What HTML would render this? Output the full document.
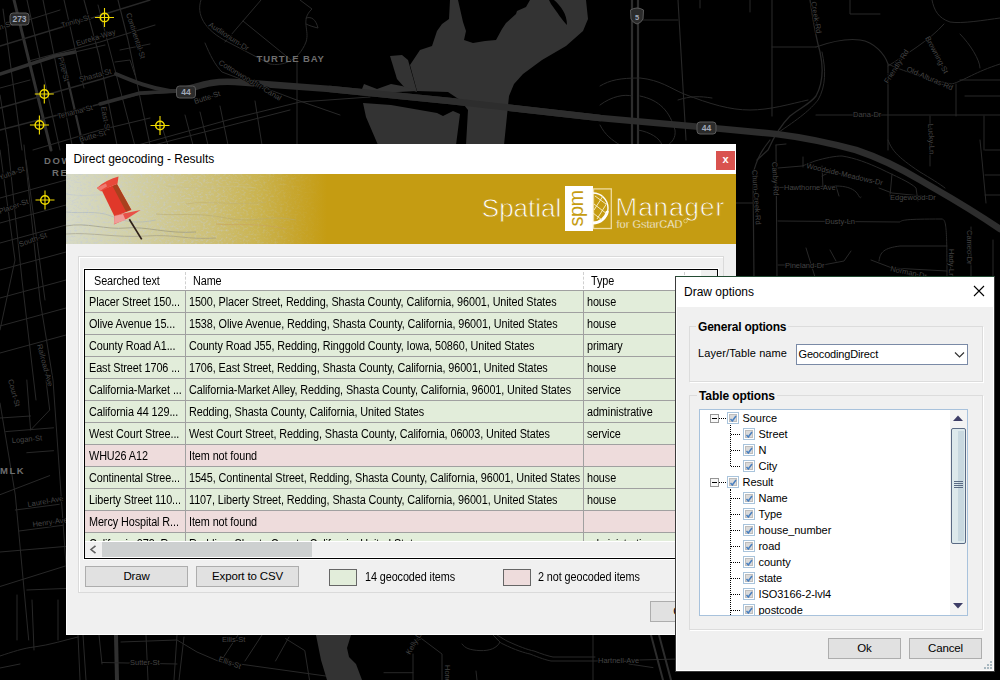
<!DOCTYPE html>
<html><head><meta charset="utf-8">
<style>
*{box-sizing:border-box}
html,body{margin:0;padding:0}
body{width:1000px;height:680px;overflow:hidden;position:relative;background:#000;font-family:"Liberation Sans",sans-serif;font-size:11px;color:#000}
.a{position:absolute}
.t{position:absolute;white-space:nowrap;letter-spacing:-0.16px;line-height:13px}
.r{font-size:12px;letter-spacing:-0.1px;transform:scaleX(0.903);transform-origin:0 0}
.btn{position:absolute;background:#e1e1e1;border:1px solid #adadad;text-align:center;font-size:11.5px;letter-spacing:-0.15px}
</style></head><body>
<svg class="a" style="left:0;top:0" width="1000" height="680" viewBox="0 0 1000 680">
<path d="M3.0 9.0 L22.0 150.0" fill="none" stroke="#282828" stroke-width="1.1" stroke-linejoin="round" stroke-linecap="round"/>
<path d="M14.0 0.0 L51.0 150.0" fill="none" stroke="#303030" stroke-width="3.0" stroke-linejoin="round" stroke-linecap="round"/>
<path d="M27.0 0.0 L60.0 150.0" fill="none" stroke="#282828" stroke-width="1.1" stroke-linejoin="round" stroke-linecap="round"/>
<path d="M43.0 0.0 L68.0 124.0 L73.0 150.0" fill="none" stroke="#282828" stroke-width="1.1" stroke-linejoin="round" stroke-linecap="round"/>
<path d="M62.0 55.0 L84.0 150.0" fill="none" stroke="#303030" stroke-width="2.2" stroke-linejoin="round" stroke-linecap="round"/>
<path d="M64.0 0.0 L84.0 88.0" fill="none" stroke="#282828" stroke-width="1.1" stroke-linejoin="round" stroke-linecap="round"/>
<path d="M84.0 0.0 L99.0 55.0 L118.0 150.0" fill="none" stroke="#282828" stroke-width="1.1" stroke-linejoin="round" stroke-linecap="round"/>
<path d="M98.0 5.0 L136.0 150.0" fill="none" stroke="#282828" stroke-width="1.0" stroke-linejoin="round" stroke-linecap="round"/>
<path d="M118.0 0.0 L128.0 40.0 L150.0 145.0" fill="none" stroke="#282828" stroke-width="1.1" stroke-linejoin="round" stroke-linecap="round"/>
<path d="M0.0 95.0 L8.0 145.0" fill="none" stroke="#282828" stroke-width="1.0" stroke-linejoin="round" stroke-linecap="round"/>
<path d="M0.0 46.0 L100.0 15.5 L150.0 0.0" fill="none" stroke="#282828" stroke-width="1.4" stroke-linejoin="round" stroke-linecap="round"/>
<path d="M0.0 29.0 L60.0 10.0" fill="none" stroke="#282828" stroke-width="1.0" stroke-linejoin="round" stroke-linecap="round"/>
<path d="M28.7 61.0 L100.0 42.0 L155.0 25.0" fill="none" stroke="#282828" stroke-width="1.1" stroke-linejoin="round" stroke-linecap="round"/>
<path d="M0.0 74.0 L55.0 56.0 L75.0 52.0" fill="none" stroke="#303030" stroke-width="3.5" stroke-linejoin="round" stroke-linecap="round"/>
<path d="M75.0 52.0 L105.0 45.0" fill="none" stroke="#282828" stroke-width="1.2" stroke-linejoin="round" stroke-linecap="round"/>
<path d="M0.0 108.0 L100.0 79.5 L118.0 74.0" fill="none" stroke="#282828" stroke-width="1.3" stroke-linejoin="round" stroke-linecap="round"/>
<path d="M0.0 130.0 L100.0 104.0 L140.0 94.0" fill="none" stroke="#282828" stroke-width="1.6" stroke-linejoin="round" stroke-linecap="round"/>
<path d="M33.0 150.0 L100.0 130.0 L150.0 118.0" fill="none" stroke="#282828" stroke-width="1.1" stroke-linejoin="round" stroke-linecap="round"/>
<path d="M120.0 50.0 L150.0 44.0" fill="none" stroke="#282828" stroke-width="1.0" stroke-linejoin="round" stroke-linecap="round"/>
<path d="M115.0 62.0 L130.0 60.0 L135.0 75.0" fill="none" stroke="#282828" stroke-width="1.0" stroke-linejoin="round" stroke-linecap="round"/>
<path d="M0.0 88.0 L30.0 80.0" fill="none" stroke="#282828" stroke-width="1.0" stroke-linejoin="round" stroke-linecap="round"/>
<path d="M140.0 94.0 L170.0 92.0" fill="none" stroke="#303030" stroke-width="2.2" stroke-linejoin="round" stroke-linecap="round"/>
<path d="M120.0 150.0 L235.0 118.0 L300.0 102.0 L370.0 97.0" fill="none" stroke="#282828" stroke-width="1.0" stroke-linejoin="round" stroke-linecap="round"/>
<path d="M150.0 146.0 L290.0 110.0" fill="none" stroke="#282828" stroke-width="1.0" stroke-linejoin="round" stroke-linecap="round"/>
<path d="M160.0 121.0 L168.0 145.0" fill="none" stroke="#282828" stroke-width="1.0" stroke-linejoin="round" stroke-linecap="round"/>
<path d="M185.0 115.0 L193.0 145.0" fill="none" stroke="#282828" stroke-width="1.0" stroke-linejoin="round" stroke-linecap="round"/>
<path d="M200.0 112.0 L208.0 145.0" fill="none" stroke="#282828" stroke-width="1.0" stroke-linejoin="round" stroke-linecap="round"/>
<path d="M220.0 106.0 L228.0 145.0" fill="none" stroke="#282828" stroke-width="1.0" stroke-linejoin="round" stroke-linecap="round"/>
<path d="M255.0 101.0 L262.0 145.0" fill="none" stroke="#282828" stroke-width="1.0" stroke-linejoin="round" stroke-linecap="round"/>
<path d="M135.0 30.0 L140.0 50.0" fill="none" stroke="#282828" stroke-width="1.0" stroke-linejoin="round" stroke-linecap="round"/>
<path d="M201 0 C196 14 204 30 228 42 L270 64 C282 66 298 62 306 42 C310 30 300 20 312 9 L300 0" fill="none" stroke="#282828" stroke-width="1.0" stroke-linejoin="round" stroke-linecap="round"/>
<path d="M261.0 0.0 L225.0 42.0" fill="none" stroke="#282828" stroke-width="1.0" stroke-linejoin="round" stroke-linecap="round"/>
<path d="M243.0 21.0 L291.0 60.0" fill="none" stroke="#282828" stroke-width="1.0" stroke-linejoin="round" stroke-linecap="round"/>
<path d="M205 43 C210 55 215 65 222 72 L294 99 L340 115" fill="none" stroke="#282828" stroke-width="1.0" stroke-linejoin="round" stroke-linecap="round"/>
<path d="M297.0 60.0 L297.0 145.0" fill="none" stroke="#282828" stroke-width="1.0" stroke-linejoin="round" stroke-linecap="round"/>
<path d="M306 18 C312 16 316 20 318 28 C314 27 310 26 306 24" fill="none" stroke="#282828" stroke-width="1.0" stroke-linejoin="round" stroke-linecap="round"/>
<path d="M632.0 0.0 L632.0 145.0" fill="none" stroke="#2d2d2d" stroke-width="2.2" stroke-linejoin="round" stroke-linecap="round"/>
<path d="M638.0 0.0 L638.0 145.0" fill="none" stroke="#2d2d2d" stroke-width="2.2" stroke-linejoin="round" stroke-linecap="round"/>
<path d="M640.0 20.0 L678.0 20.0" fill="none" stroke="#282828" stroke-width="1.0" stroke-linejoin="round" stroke-linecap="round"/>
<path d="M678.0 0.0 L686.0 140.0" fill="none" stroke="#282828" stroke-width="1.1" stroke-linejoin="round" stroke-linecap="round"/>
<path d="M772.0 0.0 L772.0 116.0" fill="none" stroke="#282828" stroke-width="1.1" stroke-linejoin="round" stroke-linecap="round"/>
<path d="M772.0 47.0 L816.0 47.0" fill="none" stroke="#282828" stroke-width="1.0" stroke-linejoin="round" stroke-linecap="round"/>
<path d="M810 0 C812 12 814 30 820 52 C824 70 822 85 816 96 C810 104 800 108 790 116 C782 124 776 132 768 150 L757 160" fill="none" stroke="#282828" stroke-width="1.3" stroke-linejoin="round" stroke-linecap="round"/>
<path d="M822 52 C826 70 826 86 818 100 C810 110 800 118 776 134" fill="none" stroke="#282828" stroke-width="1.0" stroke-linejoin="round" stroke-linecap="round"/>
<path d="M816 47 C830 42 845 38 860 40 C875 42 885 55 888 64 L888 150" fill="none" stroke="#282828" stroke-width="1.1" stroke-linejoin="round" stroke-linecap="round"/>
<path d="M888 64 C900 70 930 80 952 84 C965 80 975 72 1000 64" fill="none" stroke="#282828" stroke-width="1.0" stroke-linejoin="round" stroke-linecap="round"/>
<path d="M932 0 C934 10 938 18 950 22 C962 24 985 20 1000 18" fill="none" stroke="#282828" stroke-width="1.0" stroke-linejoin="round" stroke-linecap="round"/>
<path d="M944 24 C930 40 905 55 888 66" fill="none" stroke="#282828" stroke-width="1.0" stroke-linejoin="round" stroke-linecap="round"/>
<path d="M960 34 C970 44 980 60 980 68" fill="none" stroke="#282828" stroke-width="1.0" stroke-linejoin="round" stroke-linecap="round"/>
<path d="M816.0 115.0 L1000.0 115.0" fill="none" stroke="#282828" stroke-width="1.2" stroke-linejoin="round" stroke-linecap="round"/>
<path d="M956.0 84.0 L956.0 116.0" fill="none" stroke="#282828" stroke-width="1.0" stroke-linejoin="round" stroke-linecap="round"/>
<path d="M930.0 116.0 L930.0 150.0" fill="none" stroke="#282828" stroke-width="1.0" stroke-linejoin="round" stroke-linecap="round"/>
<path d="M984.0 116.0 L984.0 150.0" fill="none" stroke="#282828" stroke-width="1.0" stroke-linejoin="round" stroke-linecap="round"/>
<path d="M960.0 80.0 L1000.0 80.0" fill="none" stroke="#282828" stroke-width="1.0" stroke-linejoin="round" stroke-linecap="round"/>
<path d="M965.0 96.0 L1000.0 96.0" fill="none" stroke="#282828" stroke-width="1.0" stroke-linejoin="round" stroke-linecap="round"/>
<path d="M700.0 0.0 L700.0 8.0" fill="none" stroke="#282828" stroke-width="1.0" stroke-linejoin="round" stroke-linecap="round"/>
<path d="M750.0 0.0 L750.0 12.0" fill="none" stroke="#282828" stroke-width="1.0" stroke-linejoin="round" stroke-linecap="round"/>
<path d="M850.0 0.0 L850.0 14.0 L880.0 14.0" fill="none" stroke="#282828" stroke-width="1.0" stroke-linejoin="round" stroke-linecap="round"/>
<path d="M600 86 C610 80 620 78 640 78 C660 80 670 88 684 94 C710 104 730 110 750 110 C770 110 790 104 808 100" fill="none" stroke="#282828" stroke-width="1.0" stroke-linejoin="round" stroke-linecap="round"/>
<path d="M678 100 C690 96 700 96 712 98" fill="none" stroke="#282828" stroke-width="1.0" stroke-linejoin="round" stroke-linecap="round"/>
<path d="M600 105 C612 96 625 94 632 96" fill="none" stroke="#282828" stroke-width="1.0" stroke-linejoin="round" stroke-linecap="round"/>
<path d="M640 96 C660 100 670 112 675 130 C676 138 672 142 668 145" fill="none" stroke="#282828" stroke-width="1.0" stroke-linejoin="round" stroke-linecap="round"/>
<path d="M600 125 C605 135 612 140 620 145" fill="none" stroke="#282828" stroke-width="1.0" stroke-linejoin="round" stroke-linecap="round"/>
<path d="M638 130 C650 132 660 138 662 145" fill="none" stroke="#282828" stroke-width="1.0" stroke-linejoin="round" stroke-linecap="round"/>
<path d="M770 140 C762 150 757 158 753 174 L754 280" fill="none" stroke="#282828" stroke-width="1.2" stroke-linejoin="round" stroke-linecap="round"/>
<path d="M736.0 203.0 L753.0 203.0" fill="none" stroke="#282828" stroke-width="1.0" stroke-linejoin="round" stroke-linecap="round"/>
<path d="M776.0 145.0 L777.0 280.0" fill="none" stroke="#282828" stroke-width="1.1" stroke-linejoin="round" stroke-linecap="round"/>
<path d="M776.0 145.0 L786.0 144.0" fill="none" stroke="#282828" stroke-width="1.0" stroke-linejoin="round" stroke-linecap="round"/>
<path d="M778 168 L802 166 C808 164 812 162 815 161 C825 158 835 156 842 156 C855 158 868 163 881 169 C895 176 910 182 916 188 L918 201" fill="none" stroke="#282828" stroke-width="1.0" stroke-linejoin="round" stroke-linecap="round"/>
<path d="M803.0 157.0 L803.0 167.0" fill="none" stroke="#282828" stroke-width="1.0" stroke-linejoin="round" stroke-linecap="round"/>
<path d="M822.0 166.0 L823.0 188.0" fill="none" stroke="#282828" stroke-width="1.0" stroke-linejoin="round" stroke-linecap="round"/>
<path d="M822.0 176.0 L830.0 172.0" fill="none" stroke="#282828" stroke-width="1.0" stroke-linejoin="round" stroke-linecap="round"/>
<path d="M778 187.5 L836 186 C845 186 852 188 856 192 C859 195 860 200 861 197" fill="none" stroke="#282828" stroke-width="1.0" stroke-linejoin="round" stroke-linecap="round"/>
<path d="M836.0 186.0 L839.0 196.0" fill="none" stroke="#282828" stroke-width="1.0" stroke-linejoin="round" stroke-linecap="round"/>
<path d="M879 188 L892 193 L931 197" fill="none" stroke="#282828" stroke-width="1.0" stroke-linejoin="round" stroke-linecap="round"/>
<path d="M892.0 174.0 L890.0 196.0" fill="none" stroke="#282828" stroke-width="1.0" stroke-linejoin="round" stroke-linecap="round"/>
<path d="M778 221 L900 222 C902 220 905 219 942 219 C946 220 947 224 947 280" fill="none" stroke="#282828" stroke-width="1.0" stroke-linejoin="round" stroke-linecap="round"/>
<path d="M879 261 C880 252 884 248 900 246 L947 246" fill="none" stroke="#282828" stroke-width="1.0" stroke-linejoin="round" stroke-linecap="round"/>
<path d="M871 260 L892 268 L947 271" fill="none" stroke="#282828" stroke-width="1.0" stroke-linejoin="round" stroke-linecap="round"/>
<path d="M778 265 L823 265 L844 261 L851 251" fill="none" stroke="#282828" stroke-width="1.0" stroke-linejoin="round" stroke-linecap="round"/>
<path d="M806.0 248.0 L815.0 277.0" fill="none" stroke="#282828" stroke-width="1.0" stroke-linejoin="round" stroke-linecap="round"/>
<path d="M830.0 250.0 L836.0 261.0" fill="none" stroke="#282828" stroke-width="1.0" stroke-linejoin="round" stroke-linecap="round"/>
<path d="M971.0 227.0 L971.0 280.0" fill="none" stroke="#282828" stroke-width="1.0" stroke-linejoin="round" stroke-linecap="round"/>
<path d="M993.0 240.0 L993.0 280.0" fill="none" stroke="#282828" stroke-width="1.0" stroke-linejoin="round" stroke-linecap="round"/>
<path d="M930.0 140.0 L930.0 166.0" fill="none" stroke="#282828" stroke-width="1.0" stroke-linejoin="round" stroke-linecap="round"/>
<path d="M888 140 C892 150 896 156 920 172 C930 178 940 184 945 188" fill="none" stroke="#282828" stroke-width="1.0" stroke-linejoin="round" stroke-linecap="round"/>
<path d="M980 140 L982 160 L986 203" fill="none" stroke="#282828" stroke-width="1.0" stroke-linejoin="round" stroke-linecap="round"/>
<path d="M985.0 150.0 L1000.0 150.0" fill="none" stroke="#282828" stroke-width="1.0" stroke-linejoin="round" stroke-linecap="round"/>
<path d="M985.0 175.0 L1000.0 175.0" fill="none" stroke="#282828" stroke-width="1.0" stroke-linejoin="round" stroke-linecap="round"/>
<path d="M985.0 195.0 L1000.0 195.0" fill="none" stroke="#282828" stroke-width="1.0" stroke-linejoin="round" stroke-linecap="round"/>
<path d="M8.0 145.0 L22.0 280.0 L36.0 400.0" fill="none" stroke="#282828" stroke-width="1.0" stroke-linejoin="round" stroke-linecap="round"/>
<path d="M24.0 145.0 L40.0 300.0 L53.0 380.0 L67.0 579.0" fill="none" stroke="#282828" stroke-width="1.0" stroke-linejoin="round" stroke-linecap="round"/>
<path d="M0.0 150.0 L15.0 260.0 L0.0 330.0" fill="none" stroke="#282828" stroke-width="1.0" stroke-linejoin="round" stroke-linecap="round"/>
<path d="M26.8 380.0 L30.6 430.0" fill="none" stroke="#282828" stroke-width="1.0" stroke-linejoin="round" stroke-linecap="round"/>
<path d="M46.0 380.0 L49.7 410.0 L30.6 430.0" fill="none" stroke="#282828" stroke-width="1.0" stroke-linejoin="round" stroke-linecap="round"/>
<path d="M0.0 403.0 L15.3 495.0 L28.7 640.0" fill="none" stroke="#282828" stroke-width="1.0" stroke-linejoin="round" stroke-linecap="round"/>
<path d="M0.0 418.0 L30.6 416.0" fill="none" stroke="#282828" stroke-width="1.0" stroke-linejoin="round" stroke-linecap="round"/>
<path d="M5.7 431.6 L53.5 427.8" fill="none" stroke="#282828" stroke-width="1.0" stroke-linejoin="round" stroke-linecap="round"/>
<path d="M26.8 452.7 L53.5 450.7" fill="none" stroke="#282828" stroke-width="1.0" stroke-linejoin="round" stroke-linecap="round"/>
<path d="M0.0 494.7 L49.7 475.6" fill="none" stroke="#282828" stroke-width="1.0" stroke-linejoin="round" stroke-linecap="round"/>
<path d="M15.3 510.0 L59.3 504.3" fill="none" stroke="#282828" stroke-width="1.0" stroke-linejoin="round" stroke-linecap="round"/>
<path d="M19.1 531.0 L63.0 525.3" fill="none" stroke="#282828" stroke-width="1.0" stroke-linejoin="round" stroke-linecap="round"/>
<path d="M0.0 552.0 L67.0 546.3" fill="none" stroke="#282828" stroke-width="1.0" stroke-linejoin="round" stroke-linecap="round"/>
<path d="M0.0 586.5 L67.0 565.5" fill="none" stroke="#282828" stroke-width="1.0" stroke-linejoin="round" stroke-linecap="round"/>
<path d="M26.8 590.0 L67.0 588.4" fill="none" stroke="#282828" stroke-width="1.0" stroke-linejoin="round" stroke-linecap="round"/>
<path d="M0.0 198.0 L66.0 180.0" fill="none" stroke="#282828" stroke-width="1.0" stroke-linejoin="round" stroke-linecap="round"/>
<path d="M0.0 223.0 L66.0 205.0" fill="none" stroke="#282828" stroke-width="1.0" stroke-linejoin="round" stroke-linecap="round"/>
<path d="M0.0 243.0 L66.0 225.0" fill="none" stroke="#282828" stroke-width="1.0" stroke-linejoin="round" stroke-linecap="round"/>
<path d="M0.0 270.0 L66.0 252.0" fill="none" stroke="#282828" stroke-width="1.0" stroke-linejoin="round" stroke-linecap="round"/>
<path d="M0.0 298.0 L66.0 280.0" fill="none" stroke="#282828" stroke-width="1.0" stroke-linejoin="round" stroke-linecap="round"/>
<path d="M0.0 326.0 L66.0 308.0" fill="none" stroke="#282828" stroke-width="1.0" stroke-linejoin="round" stroke-linecap="round"/>
<path d="M0.0 353.0 L66.0 335.0" fill="none" stroke="#282828" stroke-width="1.0" stroke-linejoin="round" stroke-linecap="round"/>
<path d="M26.0 160.0 L45.0 300.0" fill="none" stroke="#282828" stroke-width="1.0" stroke-linejoin="round" stroke-linecap="round"/>
<path d="M17.0 595.0 L17.0 640.0" fill="none" stroke="#282828" stroke-width="1.0" stroke-linejoin="round" stroke-linecap="round"/>
<path d="M32.0 600.0 L34.0 650.0" fill="none" stroke="#282828" stroke-width="1.0" stroke-linejoin="round" stroke-linecap="round"/>
<path d="M58.0 600.0 L58.0 640.0" fill="none" stroke="#282828" stroke-width="1.0" stroke-linejoin="round" stroke-linecap="round"/>
<path d="M116.0 635.0 L117.0 680.0" fill="none" stroke="#303030" stroke-width="4.0" stroke-linejoin="round" stroke-linecap="round"/>
<path d="M78.0 635.0 L80.0 680.0" fill="none" stroke="#282828" stroke-width="1.0" stroke-linejoin="round" stroke-linecap="round"/>
<path d="M83.0 635.0 L86.0 680.0" fill="none" stroke="#282828" stroke-width="1.0" stroke-linejoin="round" stroke-linecap="round"/>
<path d="M121 642 L177 640 L197 652 L218 661 L340 678" fill="none" stroke="#282828" stroke-width="1.0" stroke-linejoin="round" stroke-linecap="round"/>
<path d="M102.0 662.5 L177.0 664.0" fill="none" stroke="#282828" stroke-width="1.0" stroke-linejoin="round" stroke-linecap="round"/>
<path d="M0 656 C12 652 24 648 34 647 C50 645 65 640 78 637" fill="none" stroke="#282828" stroke-width="1.0" stroke-linejoin="round" stroke-linecap="round"/>
<path d="M99.0 635.0 L102.0 664.0" fill="none" stroke="#282828" stroke-width="1.0" stroke-linejoin="round" stroke-linecap="round"/>
<path d="M146.0 635.0 L148.0 680.0" fill="none" stroke="#282828" stroke-width="1.0" stroke-linejoin="round" stroke-linecap="round"/>
<path d="M177.0 635.0 L174.0 680.0" fill="none" stroke="#282828" stroke-width="1.0" stroke-linejoin="round" stroke-linecap="round"/>
<path d="M184.0 637.0 L179.0 680.0" fill="none" stroke="#282828" stroke-width="1.0" stroke-linejoin="round" stroke-linecap="round"/>
<path d="M238.0 635.0 L221.0 661.0" fill="none" stroke="#282828" stroke-width="1.0" stroke-linejoin="round" stroke-linecap="round"/>
<path d="M245.0 661.0 L262.0 635.0" fill="none" stroke="#282828" stroke-width="1.0" stroke-linejoin="round" stroke-linecap="round"/>
<path d="M275.5 661.0 L289.0 637.0" fill="none" stroke="#282828" stroke-width="1.0" stroke-linejoin="round" stroke-linecap="round"/>
<path d="M285.7 638.7 L304.8 650.6 L309.5 680" fill="none" stroke="#282828" stroke-width="1.0" stroke-linejoin="round" stroke-linecap="round"/>
<path d="M384.0 672.7 L413.0 672.7" fill="none" stroke="#282828" stroke-width="1.0" stroke-linejoin="round" stroke-linecap="round"/>
<path d="M413.0 654.0 L413.0 680.0" fill="none" stroke="#282828" stroke-width="1.0" stroke-linejoin="round" stroke-linecap="round"/>
<path d="M408 654 C412 646 416 640 421.6 638.7 L442 654 L442 680" fill="none" stroke="#282828" stroke-width="1.0" stroke-linejoin="round" stroke-linecap="round"/>
<path d="M462 644 C465 648 469 650 480 650.6 C490 651 497 648 500 642 L493 635" fill="none" stroke="#282828" stroke-width="1.0" stroke-linejoin="round" stroke-linecap="round"/>
<path d="M493 635 C498 640 500 643 503 644 C515 650 525 653 530 654 C540 658 546 660 551 661 L595 661 L680 659" fill="none" stroke="#282828" stroke-width="1.0" stroke-linejoin="round" stroke-linecap="round"/>
<path d="M497 635 C502 638 505 640 507 641 C518 646 528 650 534 651 C542 654 548 656 553 657 L595 657" fill="none" stroke="#282828" stroke-width="1.0" stroke-linejoin="round" stroke-linecap="round"/>
<path d="M593.0 635.0 L593.0 680.0" fill="none" stroke="#282828" stroke-width="1.0" stroke-linejoin="round" stroke-linecap="round"/>
<path d="M476.0 671.0 L477.0 680.0" fill="none" stroke="#282828" stroke-width="1.0" stroke-linejoin="round" stroke-linecap="round"/>
<path d="M651.0 635.0 L663.0 680.0" fill="none" stroke="#2d2d2d" stroke-width="2.0" stroke-linejoin="round" stroke-linecap="round"/>
<path d="M659.0 635.0 L671.0 680.0" fill="none" stroke="#2d2d2d" stroke-width="2.0" stroke-linejoin="round" stroke-linecap="round"/>
<path d="M629.0 664.0 L653.0 667.6" fill="none" stroke="#282828" stroke-width="1.0" stroke-linejoin="round" stroke-linecap="round"/>
<path d="M0.0 668.0 L20.0 664.0" fill="none" stroke="#282828" stroke-width="1.0" stroke-linejoin="round" stroke-linecap="round"/>
<path d="M116 74 C135 82 150 88 170 91 L180 91" fill="none" stroke="#2d2d2d" stroke-width="4.0" stroke-linejoin="round" stroke-linecap="round"/>
<path d="M100 104 L140 93 L180 91" fill="none" stroke="#2d2d2d" stroke-width="3.5" stroke-linejoin="round" stroke-linecap="round"/>
<path d="M180 91 L195 87 C205 84 215 81 235 82 L330 89 L450 101 L600 118 L707 127.5 L776 134 C800 137 830 143 856 150 C880 158 900 168 920 180 C940 192 960 202 1000 229" fill="none" stroke="#2d2d2d" stroke-width="6.6" stroke-linejoin="round" stroke-linecap="round"/>
<path d="M450 0 L458 0 L463 22 L466 31 L464 40 L473 43 L485 41 L496 40 L502 29 L506 23 L516 14 L517 11 L526 7 L530 0 L586 0 L588 19 L583 31 L566 46 L542 60 L523 74 L514 84 L509 96 L504 145 L466 145 L468 110 L460 100 L448 92 L417 91 L410 65 L420 50 L432 46 L437 31 L442 24 L449 19 Z" fill="#333333"/>
<path d="M549 0 L554 0 C561 6 567 14 567 25 C562 20 557 12 551 4 Z" fill="#000"/>
<path d="M390 56 L402 55 L408 60 L417 92 L405 88 L397 79 Z" fill="#333333"/>
<path d="M364 84 L377 89 L391 84 L402 86 L417 91 L360 94 Z" fill="#333333"/>
<path d="M363 103 L391 105 L437 113 L443 116 L453 111 L460 114 L456 145 L378 145 L366 117 Z" fill="#333333"/>
<path d="M316 635 L351 635 L347 648 L349 657 L356 664 L362 680 L327 680 L321 660 Z" fill="#333333"/>
<path d="M330 89 L450 101 L600 118" fill="none" stroke="#2d2d2d" stroke-width="6.6" stroke-linejoin="round" stroke-linecap="round"/>
<text x="256.5" y="61.5" font-size="9.5" font-weight="bold" fill="#6e6e6e" letter-spacing="0.9" font-family="Liberation Sans">TURTLE BAY</text>
<text x="44" y="164" font-size="9.5" font-weight="bold" fill="#6e6e6e" letter-spacing="1.6" font-family="Liberation Sans">DOW</text>
<text x="52" y="176" font-size="9.5" font-weight="bold" fill="#6e6e6e" letter-spacing="1.6" font-family="Liberation Sans">RE</text>
<text x="0" y="474" font-size="9.5" font-weight="bold" fill="#6e6e6e" letter-spacing="1.5" font-family="Liberation Sans">MLK</text>
<text transform="translate(62,28) rotate(-17)" font-size="7.5" fill="#444444" stroke="#000" stroke-width="1.6" paint-order="stroke" font-family="Liberation Sans">Trinity-St</text>
<text transform="translate(77,46) rotate(-17)" font-size="7.5" fill="#444444" stroke="#000" stroke-width="1.6" paint-order="stroke" font-family="Liberation Sans">Eureka-Way</text>
<text transform="translate(80,82) rotate(-15)" font-size="7.5" fill="#444444" stroke="#000" stroke-width="1.6" paint-order="stroke" font-family="Liberation Sans">Shasta-St</text>
<text transform="translate(58,119) rotate(-15)" font-size="7.5" fill="#444444" stroke="#000" stroke-width="1.6" paint-order="stroke" font-family="Liberation Sans">Tehama-St</text>
<text transform="translate(80,142) rotate(-15)" font-size="7.5" fill="#444444" stroke="#000" stroke-width="1.6" paint-order="stroke" font-family="Liberation Sans">Butte-St</text>
<text transform="translate(58,58) rotate(75)" font-size="7.5" fill="#444444" stroke="#000" stroke-width="1.6" paint-order="stroke" font-family="Liberation Sans">Pine-St</text>
<text transform="translate(101,107) rotate(80)" font-size="7.5" fill="#444444" stroke="#000" stroke-width="1.6" paint-order="stroke" font-family="Liberation Sans">East-St</text>
<text transform="translate(126,14) rotate(72)" font-size="7.5" fill="#444444" stroke="#000" stroke-width="1.6" paint-order="stroke" font-family="Liberation Sans">Continental-St</text>
<text transform="translate(208,26) rotate(33)" font-size="7.5" fill="#444444" stroke="#000" stroke-width="1.6" paint-order="stroke" font-family="Liberation Sans">Auditorium-Dr</text>
<text transform="translate(218,64) rotate(31)" font-size="7.5" fill="#444444" stroke="#000" stroke-width="1.6" paint-order="stroke" font-family="Liberation Sans">Cottonwood-Irr-Canal</text>
<text transform="translate(195,104) rotate(-18)" font-size="7.5" fill="#444444" stroke="#000" stroke-width="1.6" paint-order="stroke" font-family="Liberation Sans">Butte-St</text>
<text transform="translate(888,84) rotate(-57)" font-size="7.5" fill="#444444" stroke="#000" stroke-width="1.6" paint-order="stroke" font-family="Liberation Sans">Friendly-Rd</text>
<text transform="translate(906,71) rotate(23)" font-size="7.5" fill="#444444" stroke="#000" stroke-width="1.6" paint-order="stroke" font-family="Liberation Sans">Old-Alturas-Rd</text>
<text transform="translate(853,117) rotate(0)" font-size="7.5" fill="#444444" stroke="#000" stroke-width="1.6" paint-order="stroke" font-family="Liberation Sans">Dana-Dr</text>
<text transform="translate(925,38) rotate(62)" font-size="7.5" fill="#444444" stroke="#000" stroke-width="1.6" paint-order="stroke" font-family="Liberation Sans">Browning-St</text>
<text transform="translate(811,2) rotate(80)" font-size="7.5" fill="#444444" stroke="#000" stroke-width="1.6" paint-order="stroke" font-family="Liberation Sans">Creek-Rd</text>
<text transform="translate(928,124) rotate(87)" font-size="7.5" fill="#444444" stroke="#000" stroke-width="1.6" paint-order="stroke" font-family="Liberation Sans">Lucky-Ln</text>
<text transform="translate(806,168) rotate(13)" font-size="7.5" fill="#444444" stroke="#000" stroke-width="1.6" paint-order="stroke" font-family="Liberation Sans">Woodside-Meadows-Dr</text>
<text transform="translate(784,190) rotate(0)" font-size="7.5" fill="#444444" stroke="#000" stroke-width="1.6" paint-order="stroke" font-family="Liberation Sans">Hawthorne-Ave</text>
<text transform="translate(890,200) rotate(0)" font-size="7.5" fill="#444444" stroke="#000" stroke-width="1.6" paint-order="stroke" font-family="Liberation Sans">Edgewood-Dr</text>
<text transform="translate(825,224) rotate(0)" font-size="7.5" fill="#444444" stroke="#000" stroke-width="1.6" paint-order="stroke" font-family="Liberation Sans">Dusty-Ln</text>
<text transform="translate(772,162) rotate(87)" font-size="7.5" fill="#444444" stroke="#000" stroke-width="1.6" paint-order="stroke" font-family="Liberation Sans">Canby-Rd</text>
<text transform="translate(752,170) rotate(86)" font-size="7.5" fill="#444444" stroke="#000" stroke-width="1.6" paint-order="stroke" font-family="Liberation Sans">Churn-Creek-Rd</text>
<text transform="translate(785,268) rotate(0)" font-size="7.5" fill="#444444" stroke="#000" stroke-width="1.6" paint-order="stroke" font-family="Liberation Sans">Pineland-Dr</text>
<text transform="translate(890,271) rotate(12)" font-size="7.5" fill="#444444" stroke="#000" stroke-width="1.6" paint-order="stroke" font-family="Liberation Sans">Norman-Dr</text>
<text transform="translate(949,249) rotate(90)" font-size="7.5" fill="#444444" stroke="#000" stroke-width="1.6" paint-order="stroke" font-family="Liberation Sans">Hady-Ln</text>
<text transform="translate(967,230) rotate(90)" font-size="7.5" fill="#444444" stroke="#000" stroke-width="1.6" paint-order="stroke" font-family="Liberation Sans">Cameo-Dr</text>
<text transform="translate(12,443) rotate(-5)" font-size="7.5" fill="#444444" stroke="#000" stroke-width="1.6" paint-order="stroke" font-family="Liberation Sans">Logan-St</text>
<text transform="translate(28,507) rotate(-10)" font-size="7.5" fill="#444444" stroke="#000" stroke-width="1.6" paint-order="stroke" font-family="Liberation Sans">Laurel-Ave</text>
<text transform="translate(33,527) rotate(-8)" font-size="7.5" fill="#444444" stroke="#000" stroke-width="1.6" paint-order="stroke" font-family="Liberation Sans">Henry-Ave</text>
<text transform="translate(222,642) rotate(0)" font-size="7.5" fill="#444444" stroke="#000" stroke-width="1.6" paint-order="stroke" font-family="Liberation Sans">Ellis-St</text>
<text transform="translate(130,665) rotate(0)" font-size="7.5" fill="#444444" stroke="#000" stroke-width="1.6" paint-order="stroke" font-family="Liberation Sans">Sutter-St</text>
<text transform="translate(598,663) rotate(0)" font-size="7.5" fill="#444444" stroke="#000" stroke-width="1.6" paint-order="stroke" font-family="Liberation Sans">Hartnell-Ave</text>
<text transform="translate(410,655) rotate(-60)" font-size="7.5" fill="#444444" stroke="#000" stroke-width="1.6" paint-order="stroke" font-family="Liberation Sans">Kelly-Ln</text>
<text transform="translate(445,665) rotate(90)" font-size="7.5" fill="#444444" stroke="#000" stroke-width="1.6" paint-order="stroke" font-family="Liberation Sans">Hondo</text>
<text transform="translate(0,30) rotate(-20)" font-size="7.5" fill="#444444" stroke="#000" stroke-width="1.6" paint-order="stroke" font-family="Liberation Sans">n-St</text>
<text transform="translate(0,180) rotate(-20)" font-size="7.5" fill="#444444" stroke="#000" stroke-width="1.6" paint-order="stroke" font-family="Liberation Sans">Yuba-St</text>
<text transform="translate(0,214) rotate(-20)" font-size="7.5" fill="#444444" stroke="#000" stroke-width="1.6" paint-order="stroke" font-family="Liberation Sans">Placer-St</text>
<text transform="translate(20,247) rotate(-20)" font-size="7.5" fill="#444444" stroke="#000" stroke-width="1.6" paint-order="stroke" font-family="Liberation Sans">South-St</text>
<text transform="translate(37,345) rotate(75)" font-size="7.5" fill="#444444" stroke="#000" stroke-width="1.6" paint-order="stroke" font-family="Liberation Sans">Railroad-Ave</text>
<text transform="translate(8,380) rotate(75)" font-size="7.5" fill="#444444" stroke="#000" stroke-width="1.6" paint-order="stroke" font-family="Liberation Sans">Court-St</text>
<text transform="translate(218,661) rotate(20)" font-size="7.5" fill="#444444" stroke="#000" stroke-width="1.6" paint-order="stroke" font-family="Liberation Sans">Ellis-St</text>
<rect x="176.5" y="86" width="19" height="12" rx="3" fill="#2b2b2b" stroke="#5a5a5a" stroke-width="1"/>
<text x="186.0" y="95.3" text-anchor="middle" font-size="8.5" font-weight="bold" fill="#a0a8b8" font-family="Liberation Sans">44</text>
<rect x="10" y="13" width="19" height="12" rx="3" fill="#2b2b2b" stroke="#5a5a5a" stroke-width="1"/>
<text x="19.5" y="22.3" text-anchor="middle" font-size="8.5" font-weight="bold" fill="#a0a8b8" font-family="Liberation Sans">273</text>
<rect x="697" y="122" width="19" height="12" rx="3" fill="#2b2b2b" stroke="#5a5a5a" stroke-width="1"/>
<text x="706.5" y="131.3" text-anchor="middle" font-size="8.5" font-weight="bold" fill="#a0a8b8" font-family="Liberation Sans">44</text>
<path d="M630.5 10 Q637 6 643.5 10 L643 19 Q641 23 637 24 Q633 23 631 19 Z" fill="#2b2b2b" stroke="#5a5a5a"/>
<text x="637" y="20" text-anchor="middle" font-size="7.5" font-weight="bold" fill="#a0a8b8" font-family="Liberation Sans">5</text>
<circle cx="104.5" cy="17.5" r="4.3" fill="none" stroke="#f2dc00" stroke-width="1.5"/>
<path d="M95.0 17.5H114.0M104.5 8.0V27.0" stroke="#f2dc00" stroke-width="1.1"/>
<circle cx="44.3" cy="94" r="4.3" fill="none" stroke="#f2dc00" stroke-width="1.5"/>
<path d="M34.8 94H53.8M44.3 84.5V103.5" stroke="#f2dc00" stroke-width="1.1"/>
<circle cx="39.4" cy="125" r="4.3" fill="none" stroke="#f2dc00" stroke-width="1.5"/>
<path d="M29.9 125H48.9M39.4 115.5V134.5" stroke="#f2dc00" stroke-width="1.1"/>
<circle cx="160" cy="125.5" r="4.3" fill="none" stroke="#f2dc00" stroke-width="1.5"/>
<path d="M150.5 125.5H169.5M160 116.0V135.0" stroke="#f2dc00" stroke-width="1.1"/>
<circle cx="45" cy="200" r="4.3" fill="none" stroke="#f2dc00" stroke-width="1.5"/>
<path d="M35.5 200H54.5M45 190.5V209.5" stroke="#f2dc00" stroke-width="1.1"/>
</svg>
<div class="a" style="left:66px;top:144px;width:670px;height:491px;background:#f0f0f0;border-left:1px solid #fff;border-bottom:1px solid #fff"></div>
<div class="a" style="left:66px;top:144px;width:670px;height:30px;background:#fff"></div>
<span class="t" style="left:73.5px;top:152px;font-size:12px;letter-spacing:0px;line-height:14px">Direct geocoding - Results</span>
<div class="a" style="left:716px;top:151px;width:19px;height:19px;background:#d9534f;color:#fff;font-weight:bold;font-size:11px;line-height:17px;text-align:center">x</div>
<div class="a" style="left:66px;top:174px;width:670px;height:70px;background:linear-gradient(90deg,#d7dac6 0%,#d3d2ac 8%,#d0ca96 14%,#cdbf74 22%,#cab34e 29%,#c7a62e 34%,#c59c12 39%,#c59c12 100%)"></div>
<svg class="a" style="left:66px;top:174px" width="670" height="70" viewBox="0 0 670 70">
 <defs>
  <filter id="tx" x="0" y="0" width="100%" height="100%"><feTurbulence type="fractalNoise" baseFrequency="0.35 0.5" numOctaves="2" seed="3"/><feColorMatrix type="matrix" values="0 0 0 0 0.55  0 0 0 0 0.6  0 0 0 0 0.7  0 0 0 2.2 -1.05"/></filter>
  <linearGradient id="fade" x1="0" x2="1"><stop offset="0" stop-color="#fff" stop-opacity="1"/><stop offset="0.55" stop-color="#fff" stop-opacity="0.7"/><stop offset="1" stop-color="#fff" stop-opacity="0"/></linearGradient>
  <mask id="m1"><rect width="260" height="70" fill="url(#fade)"/></mask>
 </defs>
 <rect width="260" height="70" filter="url(#tx)" mask="url(#m1)" opacity="0.8"/>
 <g fill="none" stroke-width="1" opacity="0.55">
  <path d="M0 52 C20 48 40 56 60 54 S100 60 130 58" stroke="#8c8a78"/>
  <path d="M0 60 C25 58 50 64 80 62 S120 66 150 64" stroke="#9a9480"/>
  <path d="M0 38 C15 40 30 36 45 42 S70 50 90 46" stroke="#a8b4c4"/>
  <path d="M90 40 C110 42 130 38 160 44 S200 40 230 46" stroke="#b8aa70"/>
  <path d="M120 30 C140 26 170 32 200 28" stroke="#c0b070"/>
  <path d="M150 50 C170 52 190 48 220 55" stroke="#c8a060"/>
  <path d="M0 20 C20 24 40 18 60 22" stroke="#c0c8d0"/>
  <path d="M100 12 C130 16 160 10 190 14" stroke="#c8bf8a"/>
 </g>
 <g transform="translate(107.7 184) rotate(-31)" transform-origin="0 0">
 </g>
 <g fill="#e0382a">
  <path d="M63.3 45.3 L75.7 65.4" stroke="#2e2018" stroke-width="1.7" fill="none"/>
  <path d="M35.5 15.8 L51 10 L65.5 36 L48.5 42.5 Z"/>
  <path d="M46.5 12 L51 10.3 L65 35.5 L60 37.5 Z" fill="#a8401e"/>
  <path d="M30.9 13.9 Q40 6 52.5 2.6 L51.5 9.8 Q42 13 35 17.5 Z" fill="#e8483a"/>
  <path d="M31 14 Q36 11 40 9.5 L41 12.5 Q37 14.5 34.5 17 Z" fill="#f07a70"/>
  <path d="M48.4 41.2 L74.7 36 L61.8 44.3 L47.9 50.5 Z" fill="#e85048"/>
  <path d="M48.4 42 L57 40 L59.5 46 L48 50 Z" fill="#f09c98"/>
 </g>
 <text x="415.8" y="43" font-size="26" fill="#fff" stroke="#c59c12" stroke-width="0.8" font-family="Liberation Sans">Spatial</text>
 <rect x="499" y="12" width="28" height="45" fill="#fff"/>
 <text transform="translate(517,52.5) rotate(-90)" font-size="20" letter-spacing="-0.5" fill="#c59c12" font-family="Liberation Sans">spm</text>
 <rect x="527.5" y="14.9" width="17.8" height="39.6" fill="none" stroke="#efdca0" stroke-width="1.3"/>
 <path d="M527 19 A 15 15 0 0 1 527 49" fill="none" stroke="#fff" stroke-width="1.4"/>
 <path d="M541.5 37 A 15 15 0 0 1 527 49" fill="none" stroke="#fff" stroke-width="3"/>
 <g stroke="#f8f0d0" stroke-width="0.9" fill="none">
  <path d="M529 22 L540 30"/><path d="M528 30 L541 40"/><path d="M527 39 L536 46"/>
  <path d="M537 22 L528 36"/><path d="M541 29 L531 45"/>
 </g>
 <text x="549.5" y="42.3" font-size="26" letter-spacing="1.0" fill="#fff" stroke="#c59c12" stroke-width="0.8" font-family="Liberation Sans">Manager</text>
 <text x="550.5" y="54.1" font-size="11" letter-spacing="0" fill="#fff" stroke="#c59c12" stroke-width="0.3" font-family="Liberation Sans">for GstarCAD</text>
 <circle cx="619.5" cy="47" r="1.8" fill="none" stroke="#f0e0a0" stroke-width="0.6"/>
</svg>
<div class="a" style="left:78px;top:256px;width:646px;height:337px;border:1px solid #dadada;box-shadow:inset 1px 1px 0 #fff"></div>
<div class="a" style="left:83px;top:268px;width:636px;height:292px;border:1px solid #fff"></div>
<div class="a" style="left:84px;top:269px;width:634px;height:290px;border:1px solid #000;background:#fff"></div>
<div class="a" style="left:85px;top:270px;width:632px;height:21px;background:#fff;border-bottom:1px solid #a0a0a0"></div>
<div class="a" style="left:701px;top:270px;width:16px;height:20px;background:#f0f0f0"></div>
<div class="a" style="left:185px;top:272px;width:1px;height:17px;border-left:1px dashed #d0d0d0"></div>
<div class="a" style="left:583px;top:272px;width:1px;height:17px;border-left:1px dashed #d0d0d0"></div>
<div class="a" style="left:684px;top:272px;width:1px;height:17px;border-left:1px dashed #d0d0d0"></div>
<span class="t r" style="left:94px;top:274.5px">Searched text</span>
<span class="t r" style="left:193px;top:274.5px">Name</span>
<span class="t r" style="left:591px;top:274.5px">Type</span>
<div class="a" style="left:85px;top:291px;width:632px;height:22px;background:#e2edda;border-bottom:1px solid #a0a0a0;overflow:hidden"><span class="t r" style="left:4px;top:4.5px">Placer Street 150...</span><span class="t r" style="left:104px;top:4.5px">1500, Placer Street, Redding, Shasta County, California, 96001, United States</span><span class="t r" style="left:502px;top:4.5px">house</span></div>
<div class="a" style="left:85px;top:313px;width:632px;height:22px;background:#e2edda;border-bottom:1px solid #a0a0a0;overflow:hidden"><span class="t r" style="left:4px;top:4.5px">Olive Avenue 15...</span><span class="t r" style="left:104px;top:4.5px">1538, Olive Avenue, Redding, Shasta County, California, 96001, United States</span><span class="t r" style="left:502px;top:4.5px">house</span></div>
<div class="a" style="left:85px;top:335px;width:632px;height:22px;background:#e2edda;border-bottom:1px solid #a0a0a0;overflow:hidden"><span class="t r" style="left:4px;top:4.5px">County Road A1...</span><span class="t r" style="left:104px;top:4.5px">County Road J55, Redding, Ringgold County, Iowa, 50860, United States</span><span class="t r" style="left:502px;top:4.5px">primary</span></div>
<div class="a" style="left:85px;top:357px;width:632px;height:22px;background:#e2edda;border-bottom:1px solid #a0a0a0;overflow:hidden"><span class="t r" style="left:4px;top:4.5px">East Street 1706 ...</span><span class="t r" style="left:104px;top:4.5px">1706, East Street, Redding, Shasta County, California, 96001, United States</span><span class="t r" style="left:502px;top:4.5px">house</span></div>
<div class="a" style="left:85px;top:379px;width:632px;height:22px;background:#e2edda;border-bottom:1px solid #a0a0a0;overflow:hidden"><span class="t r" style="left:4px;top:4.5px">California-Market ...</span><span class="t r" style="left:104px;top:4.5px">California-Market Alley, Redding, Shasta County, California, 96001, United States</span><span class="t r" style="left:502px;top:4.5px">service</span></div>
<div class="a" style="left:85px;top:401px;width:632px;height:22px;background:#e2edda;border-bottom:1px solid #a0a0a0;overflow:hidden"><span class="t r" style="left:4px;top:4.5px">California 44 129...</span><span class="t r" style="left:104px;top:4.5px">Redding, Shasta County, California, United States</span><span class="t r" style="left:502px;top:4.5px">administrative</span></div>
<div class="a" style="left:85px;top:423px;width:632px;height:22px;background:#e2edda;border-bottom:1px solid #a0a0a0;overflow:hidden"><span class="t r" style="left:4px;top:4.5px">West Court Stree...</span><span class="t r" style="left:104px;top:4.5px">West Court Street, Redding, Shasta County, California, 06003, United States</span><span class="t r" style="left:502px;top:4.5px">service</span></div>
<div class="a" style="left:85px;top:445px;width:632px;height:22px;background:#eedcdc;border-bottom:1px solid #a0a0a0;overflow:hidden"><span class="t r" style="left:4px;top:4.5px">WHU26 A12</span><span class="t r" style="left:104px;top:4.5px">Item not found</span><span class="t r" style="left:502px;top:4.5px"></span></div>
<div class="a" style="left:85px;top:467px;width:632px;height:22px;background:#e2edda;border-bottom:1px solid #a0a0a0;overflow:hidden"><span class="t r" style="left:4px;top:4.5px">Continental Stree...</span><span class="t r" style="left:104px;top:4.5px">1545, Continental Street, Redding, Shasta County, California, 96001, United States</span><span class="t r" style="left:502px;top:4.5px">house</span></div>
<div class="a" style="left:85px;top:489px;width:632px;height:22px;background:#e2edda;border-bottom:1px solid #a0a0a0;overflow:hidden"><span class="t r" style="left:4px;top:4.5px">Liberty Street 110...</span><span class="t r" style="left:104px;top:4.5px">1107, Liberty Street, Redding, Shasta County, California, 96001, United States</span><span class="t r" style="left:502px;top:4.5px">house</span></div>
<div class="a" style="left:85px;top:511px;width:632px;height:22px;background:#eedcdc;border-bottom:1px solid #a0a0a0;overflow:hidden"><span class="t r" style="left:4px;top:4.5px">Mercy Hospital R...</span><span class="t r" style="left:104px;top:4.5px">Item not found</span><span class="t r" style="left:502px;top:4.5px"></span></div>
<div class="a" style="left:85px;top:533px;width:632px;height:8px;background:#e2edda;overflow:hidden"><span class="t r" style="left:4px;top:4.5px">California 273, R...</span><span class="t r" style="left:104px;top:4.5px">Redding, Shasta County, California, United States</span><span class="t r" style="left:502px;top:4.5px">administrative</span></div>
<div class="a" style="left:185px;top:291px;width:1px;height:250px;background:#a0a0a0"></div>
<div class="a" style="left:583px;top:291px;width:1px;height:250px;background:#a0a0a0"></div>
<div class="a" style="left:684px;top:291px;width:1px;height:250px;background:#a0a0a0"></div>
<div class="a" style="left:85px;top:541px;width:632px;height:17px;background:#f0f0f0;border-top:1px solid #fff;border-bottom:1px solid #fff"></div>
<svg class="a" style="left:89px;top:545px" width="8" height="9"><path d="M6.5 0.8 L2 4.5 L6.5 8.2" fill="none" stroke="#606060" stroke-width="1.6"/></svg>
<div class="a" style="left:102px;top:542px;width:210px;height:15px;background:#cdd0d0"></div>
<div class="btn" style="left:85px;top:566px;width:103px;height:21px;line-height:19px">Draw</div>
<div class="btn" style="left:196px;top:566px;width:103px;height:21px;line-height:19px">Export to CSV</div>
<div class="a" style="left:329px;top:569px;width:28px;height:17px;background:#e2edda;border:1px solid #666"></div>
<span class="t r" style="left:364.5px;top:571px">14 geocoded items</span>
<div class="a" style="left:503px;top:569px;width:28px;height:17px;background:#eedcdc;border:1px solid #666"></div>
<span class="t r" style="left:538px;top:571px">2 not geocoded items</span>
<div class="btn" style="left:650px;top:601px;width:75px;height:21px;line-height:19px">Close</div>
<div class="a" style="left:675px;top:276px;width:320px;height:396px;background:#f0f0f0;border:1px solid #3a3a3a;border-top-color:#244c34"></div>
<div class="a" style="left:676px;top:277px;width:318px;height:394px;border-left:1px solid #fff;border-bottom:1px solid #fff;border-right:1px solid #fff"></div>
<div class="a" style="left:676px;top:277px;width:318px;height:30px;background:#fff"></div>
<span class="t" style="left:684px;top:285px;font-size:12px;letter-spacing:0px;line-height:14px">Draw options</span>
<svg class="a" style="left:973px;top:285px" width="12" height="12"><path d="M1 1L11 11M11 1L1 11" stroke="#000" stroke-width="1.1"/></svg>
<div class="a" style="left:689px;top:326px;width:294px;height:56px;border:1px solid #dcdcdc;box-shadow:1px 1px 0 #fff"></div>
<span class="t" style="left:696px;top:321px;font-weight:bold;font-size:12px;padding:0 2px;background:#f0f0f0;letter-spacing:-0.2px">General options</span>
<span class="t" style="left:698px;top:347px;letter-spacing:0.1px">Layer/Table name</span>
<div class="a" style="left:796px;top:344px;width:172px;height:21px;background:#fff;border:1px solid #7a8aa6"></div>
<span class="t" style="left:798.5px;top:348px">GeocodingDirect</span>
<svg class="a" style="left:953.5px;top:350.5px" width="11" height="8"><path d="M1 1.5L5.5 6L10 1.5" fill="none" stroke="#333" stroke-width="1.2"/></svg>
<div class="a" style="left:689px;top:395px;width:294px;height:235px;border:1px solid #dcdcdc;box-shadow:1px 1px 0 #fff"></div>
<span class="t" style="left:697px;top:390px;font-weight:bold;font-size:12px;padding:0 2px;background:#f0f0f0;letter-spacing:-0.1px">Table options</span>
<div class="a" style="left:699px;top:409px;width:269px;height:207px;background:#fff;border:1px solid #a8c2dc;overflow:hidden">
<div class="a" style="left:10px;top:4px;width:9px;height:9px;border:1px solid #959595;background:#f8f8f8"></div>
<div class="a" style="left:12px;top:8px;width:5px;height:1px;background:#000"></div>
<div class="a" style="left:19px;top:8px;width:7px;height:1px;border-top:1px dotted #000"></div>
<div class="a" style="left:27px;top:2px;width:12px;height:12px;border:1px solid #a9c4dc;background:#fff"></div>
<div class="a" style="left:29px;top:4px;width:8px;height:8px;border:1px solid #bdbdbd;background:#dadada"></div>
<svg class="a" style="left:29px;top:4px" width="8" height="8"><path d="M1.5 5L3.3 7L7 2" fill="none" stroke="#4a80c0" stroke-width="1.5"/></svg>
<span class="t" style="left:42.5px;top:2px;letter-spacing:-0.05px">Source</span>
<div class="a" style="left:31px;top:24px;width:9px;height:1px;border-top:1px dotted #000"></div>
<div class="a" style="left:43px;top:18px;width:12px;height:12px;border:1px solid #a9c4dc;background:#fff"></div>
<div class="a" style="left:45px;top:20px;width:8px;height:8px;border:1px solid #bdbdbd;background:#dadada"></div>
<svg class="a" style="left:45px;top:20px" width="8" height="8"><path d="M1.5 5L3.3 7L7 2" fill="none" stroke="#4a80c0" stroke-width="1.5"/></svg>
<span class="t" style="left:58.5px;top:18px;letter-spacing:-0.05px">Street</span>
<div class="a" style="left:31px;top:40px;width:9px;height:1px;border-top:1px dotted #000"></div>
<div class="a" style="left:43px;top:34px;width:12px;height:12px;border:1px solid #a9c4dc;background:#fff"></div>
<div class="a" style="left:45px;top:36px;width:8px;height:8px;border:1px solid #bdbdbd;background:#dadada"></div>
<svg class="a" style="left:45px;top:36px" width="8" height="8"><path d="M1.5 5L3.3 7L7 2" fill="none" stroke="#4a80c0" stroke-width="1.5"/></svg>
<span class="t" style="left:58.5px;top:34px;letter-spacing:-0.05px">N</span>
<div class="a" style="left:31px;top:56px;width:9px;height:1px;border-top:1px dotted #000"></div>
<div class="a" style="left:43px;top:50px;width:12px;height:12px;border:1px solid #a9c4dc;background:#fff"></div>
<div class="a" style="left:45px;top:52px;width:8px;height:8px;border:1px solid #bdbdbd;background:#dadada"></div>
<svg class="a" style="left:45px;top:52px" width="8" height="8"><path d="M1.5 5L3.3 7L7 2" fill="none" stroke="#4a80c0" stroke-width="1.5"/></svg>
<span class="t" style="left:58.5px;top:50px;letter-spacing:-0.05px">City</span>
<div class="a" style="left:10px;top:68px;width:9px;height:9px;border:1px solid #959595;background:#f8f8f8"></div>
<div class="a" style="left:12px;top:72px;width:5px;height:1px;background:#000"></div>
<div class="a" style="left:19px;top:72px;width:7px;height:1px;border-top:1px dotted #000"></div>
<div class="a" style="left:27px;top:66px;width:12px;height:12px;border:1px solid #a9c4dc;background:#fff"></div>
<div class="a" style="left:29px;top:68px;width:8px;height:8px;border:1px solid #bdbdbd;background:#dadada"></div>
<svg class="a" style="left:29px;top:68px" width="8" height="8"><path d="M1.5 5L3.3 7L7 2" fill="none" stroke="#4a80c0" stroke-width="1.5"/></svg>
<span class="t" style="left:42.5px;top:66px;letter-spacing:-0.05px">Result</span>
<div class="a" style="left:31px;top:88px;width:9px;height:1px;border-top:1px dotted #000"></div>
<div class="a" style="left:43px;top:82px;width:12px;height:12px;border:1px solid #a9c4dc;background:#fff"></div>
<div class="a" style="left:45px;top:84px;width:8px;height:8px;border:1px solid #bdbdbd;background:#dadada"></div>
<svg class="a" style="left:45px;top:84px" width="8" height="8"><path d="M1.5 5L3.3 7L7 2" fill="none" stroke="#4a80c0" stroke-width="1.5"/></svg>
<span class="t" style="left:58.5px;top:82px;letter-spacing:-0.05px">Name</span>
<div class="a" style="left:31px;top:104px;width:9px;height:1px;border-top:1px dotted #000"></div>
<div class="a" style="left:43px;top:98px;width:12px;height:12px;border:1px solid #a9c4dc;background:#fff"></div>
<div class="a" style="left:45px;top:100px;width:8px;height:8px;border:1px solid #bdbdbd;background:#dadada"></div>
<svg class="a" style="left:45px;top:100px" width="8" height="8"><path d="M1.5 5L3.3 7L7 2" fill="none" stroke="#4a80c0" stroke-width="1.5"/></svg>
<span class="t" style="left:58.5px;top:98px;letter-spacing:-0.05px">Type</span>
<div class="a" style="left:31px;top:120px;width:9px;height:1px;border-top:1px dotted #000"></div>
<div class="a" style="left:43px;top:114px;width:12px;height:12px;border:1px solid #a9c4dc;background:#fff"></div>
<div class="a" style="left:45px;top:116px;width:8px;height:8px;border:1px solid #bdbdbd;background:#dadada"></div>
<svg class="a" style="left:45px;top:116px" width="8" height="8"><path d="M1.5 5L3.3 7L7 2" fill="none" stroke="#4a80c0" stroke-width="1.5"/></svg>
<span class="t" style="left:58.5px;top:114px;letter-spacing:-0.05px">house_number</span>
<div class="a" style="left:31px;top:136px;width:9px;height:1px;border-top:1px dotted #000"></div>
<div class="a" style="left:43px;top:130px;width:12px;height:12px;border:1px solid #a9c4dc;background:#fff"></div>
<div class="a" style="left:45px;top:132px;width:8px;height:8px;border:1px solid #bdbdbd;background:#dadada"></div>
<svg class="a" style="left:45px;top:132px" width="8" height="8"><path d="M1.5 5L3.3 7L7 2" fill="none" stroke="#4a80c0" stroke-width="1.5"/></svg>
<span class="t" style="left:58.5px;top:130px;letter-spacing:-0.05px">road</span>
<div class="a" style="left:31px;top:152px;width:9px;height:1px;border-top:1px dotted #000"></div>
<div class="a" style="left:43px;top:146px;width:12px;height:12px;border:1px solid #a9c4dc;background:#fff"></div>
<div class="a" style="left:45px;top:148px;width:8px;height:8px;border:1px solid #bdbdbd;background:#dadada"></div>
<svg class="a" style="left:45px;top:148px" width="8" height="8"><path d="M1.5 5L3.3 7L7 2" fill="none" stroke="#4a80c0" stroke-width="1.5"/></svg>
<span class="t" style="left:58.5px;top:146px;letter-spacing:-0.05px">county</span>
<div class="a" style="left:31px;top:168px;width:9px;height:1px;border-top:1px dotted #000"></div>
<div class="a" style="left:43px;top:162px;width:12px;height:12px;border:1px solid #a9c4dc;background:#fff"></div>
<div class="a" style="left:45px;top:164px;width:8px;height:8px;border:1px solid #bdbdbd;background:#dadada"></div>
<svg class="a" style="left:45px;top:164px" width="8" height="8"><path d="M1.5 5L3.3 7L7 2" fill="none" stroke="#4a80c0" stroke-width="1.5"/></svg>
<span class="t" style="left:58.5px;top:162px;letter-spacing:-0.05px">state</span>
<div class="a" style="left:31px;top:184px;width:9px;height:1px;border-top:1px dotted #000"></div>
<div class="a" style="left:43px;top:178px;width:12px;height:12px;border:1px solid #a9c4dc;background:#fff"></div>
<div class="a" style="left:45px;top:180px;width:8px;height:8px;border:1px solid #bdbdbd;background:#dadada"></div>
<svg class="a" style="left:45px;top:180px" width="8" height="8"><path d="M1.5 5L3.3 7L7 2" fill="none" stroke="#4a80c0" stroke-width="1.5"/></svg>
<span class="t" style="left:58.5px;top:178px;letter-spacing:-0.05px">ISO3166-2-lvl4</span>
<div class="a" style="left:31px;top:200px;width:9px;height:1px;border-top:1px dotted #000"></div>
<div class="a" style="left:43px;top:194px;width:12px;height:12px;border:1px solid #a9c4dc;background:#fff"></div>
<div class="a" style="left:45px;top:196px;width:8px;height:8px;border:1px solid #bdbdbd;background:#dadada"></div>
<svg class="a" style="left:45px;top:196px" width="8" height="8"><path d="M1.5 5L3.3 7L7 2" fill="none" stroke="#4a80c0" stroke-width="1.5"/></svg>
<span class="t" style="left:58.5px;top:194px;letter-spacing:-0.05px">postcode</span>
<div class="a" style="left:30px;top:15px;width:1px;height:41px;border-left:1px dotted #000"></div>
<div class="a" style="left:30px;top:79px;width:1px;height:220px;border-left:1px dotted #000"></div>
<div class="a" style="left:250px;top:0px;width:17px;height:207px;background:#f3f3f3"></div>
<svg class="a" style="left:253px;top:5px" width="10" height="6"><path d="M0 6L5 0.5L10 6Z" fill="#3d3d66"/></svg>
<svg class="a" style="left:253px;top:193px" width="10" height="6"><path d="M0 0L5 5.5L10 0Z" fill="#3d3d66"/></svg>
<div class="a" style="left:251px;top:18px;width:15px;height:116px;background:#dde9ec;border:1px solid #5a6a84;border-radius:2px"></div>
<div class="a" style="left:258px;top:21px;width:6px;height:110px;background:#c8d8e0"></div>
<div class="a" style="left:254px;top:71px;width:9px;height:1px;background:#5a6a84"></div>
<div class="a" style="left:254px;top:73px;width:9px;height:1px;background:#5a6a84"></div>
<div class="a" style="left:254px;top:75px;width:9px;height:1px;background:#5a6a84"></div>
<div class="a" style="left:254px;top:77px;width:9px;height:1px;background:#5a6a84"></div>
</div>
<div class="btn" style="left:828px;top:638px;width:73px;height:21px;line-height:19px">Ok</div>
<div class="btn" style="left:909px;top:638px;width:73px;height:21px;line-height:19px">Cancel</div>
<div class="a" style="left:990px;top:661px;width:2px;height:2px;background:#a8b8c0"></div>
<div class="a" style="left:987px;top:664px;width:2px;height:2px;background:#a8b8c0"></div>
<div class="a" style="left:990px;top:664px;width:2px;height:2px;background:#a8b8c0"></div>
<div class="a" style="left:984px;top:667px;width:2px;height:2px;background:#a8b8c0"></div>
<div class="a" style="left:987px;top:667px;width:2px;height:2px;background:#a8b8c0"></div>
<div class="a" style="left:990px;top:667px;width:2px;height:2px;background:#a8b8c0"></div>
</body></html>
